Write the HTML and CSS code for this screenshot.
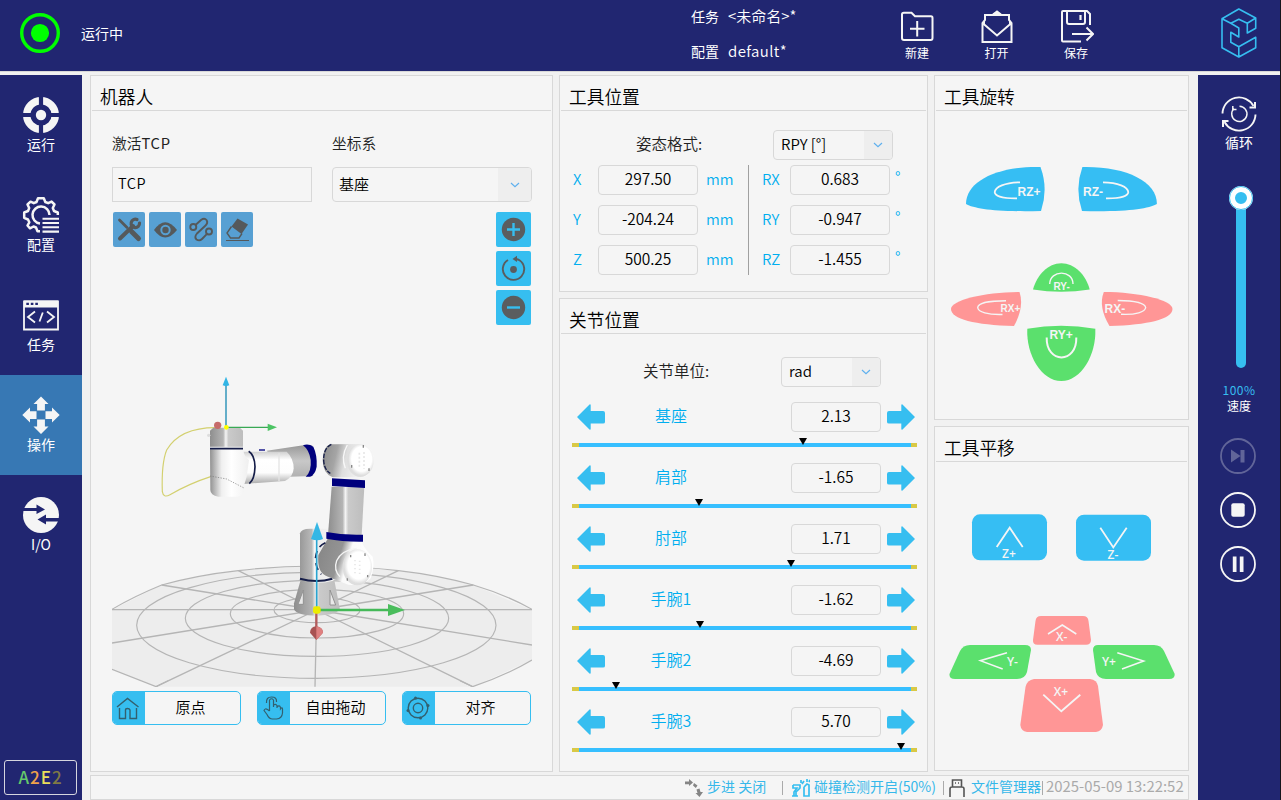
FILE: index.html
```html
<!DOCTYPE html>
<html lang="zh-CN">
<head>
<meta charset="utf-8">
<title>机器人操作</title>
<link rel="stylesheet" href="styles.css">
</head>
<body>
<svg class="defs" width="0" height="0">
  <symbol id="arrow-left" viewBox="0 0 28 26"><path d="M0 13 12.5 .5Q13.500 0 13.700 1V7H26Q28 7 28 9V18Q28 19.500 26 19.500H13.700V25Q13.500 26.300 12.500 25.500Z"/></symbol>
  <symbol id="arrow-right" viewBox="0 0 28 26"><path d="M28 13 15.500 .5Q14.500 0 14.300 1V7H2Q0 7 0 9V18Q0 19.500 2 19.500H14.300V25Q14.500 26.300 15.500 25.500Z"/></symbol>
  <symbol id="chevron" viewBox="0 0 10 6"><path d="M1 1 5 4.600 9 1" fill="none" stroke="#5fb0ee" stroke-width="1.200"/></symbol>
</svg>
<div class="app">
  <header class="topbar">
    <svg class="state-icon" viewBox="0 0 40 40"><circle cx="20" cy="20" r="18.300" fill="none" stroke="#0f0" stroke-width="3.400"/><circle cx="20" cy="20" r="9.100" fill="#0f0"/></svg>
    <span class="state">运行中</span>
    <div class="files">
      <div class="file-row"><span>任务</span><span class="file-name">&lt;未命名&gt;*</span></div>
      <div class="file-row"><span>配置</span><span class="file-name latin">default*</span></div>
    </div>
    <div class="file-actions">
      <div class="action"><svg viewBox="0 0 36 36"><path d="M4.800 4.700H12.500L16 8.300H32Q33.500 8.300 33.500 10V30Q33.500 32 31.800 32H5Q3 32 3 30V6.500Q3 4.700 4.800 4.700ZM18.200 13V28.500M11 20.700H25.500" fill="none" stroke="#f5f5f5" stroke-width="2"/></svg><span>新建</span></div>
      <div class="action"><svg viewBox="0 0 36 36"><path d="M3.500 34V15L6 12V7H30V12L32.500 15V34ZM3.500 15 18 27.500 32.500 15M14 6.500 18 3.500 22 6.500" fill="none" stroke="#f5f5f5" stroke-width="2"/><path d="M5.500 13V17L3.500 15ZM30.500 13V17L32.500 15ZM14 6.500 18 3.500 22 6.500Z" fill="#f5f5f5" stroke="#f5f5f5"/></svg><span>打开</span></div>
      <div class="action"><svg viewBox="0 0 36 36"><path d="M23 33.500H5Q4 33.500 4 32.500V4Q4 3 5 3H29L32 6V17M9 3.500V14Q9 16 11 16H25Q27 16 27 14V3.500M14 26H34.500M28.500 19.500 35 26 28.500 32.500" fill="none" stroke="#f5f5f5" stroke-width="2"/><path d="M22.500 7V12" stroke="#f5f5f5" stroke-width="2.200"/></svg><span>保存</span></div>
    </div>
    <svg class="logo" viewBox="0 0 36 50"><path d="M1 10.700 17.800 1 34.700 10V20.300L26.300 25V15.300L34.700 10M26.300 15.300 17.800 11.300 9.800 15.300 1 10.700V39.700L17.800 49 34.700 39.700V29.300L17.800 38.700 9.800 34.300V24.300L17.800 29V20L9.800 15.300M17.800 38.700V49M17.800 29" fill="none" stroke="#36bef0" stroke-width="1.600" stroke-linejoin="round"/></svg>
  </header>

  <div class="workspace">
    <nav class="nav">
      <div class="nav-item"><svg viewBox="0 0 36 36"><circle cx="18" cy="18" r="14.300" fill="none" stroke="#f5f5f5" stroke-width="7.400"/><path d="M18 0V36M0 18H36" stroke="#212671" stroke-width="4.200"/><circle cx="18" cy="18" r="8" fill="#212671"/><circle cx="18" cy="18" r="5.200" fill="#f5f5f5"/></svg><span>运行</span></div>
      <div class="nav-item"><svg viewBox="0 0 36 36"><path d="M17 34.300H14.500L13 30.500 10.500 29.500 7 31.300 4.500 28.500 6.300 25.300 5 22.500 1.200 20.800V15.500L5 14 6.200 11 4.500 7.500 7.500 4.700 10.800 6.200 13.500 5 15 1.300H20.800L22.300 5 25.200 6.200 28.600 4.600 31.500 7.500 29.800 11 31 14 34.800 15.500V18M17 26.500A8.500 8.500 0 1 1 26.500 18" fill="none" stroke="#f5f5f5" stroke-width="2.500" stroke-linejoin="round"/><path d="M19.500 21.800H36M19.500 26H36M19.500 30.300H36M19.500 34.600H36" stroke="#f5f5f5" stroke-width="2.100"/></svg><span>配置</span></div>
      <div class="nav-item"><svg viewBox="0 0 36 36"><path d="M1 4.500H35V32.500H1Z" fill="none" stroke="#f5f5f5" stroke-width="1.800"/><path d="M1 3.500H35V10.500H1Z" fill="#f5f5f5"/><path d="M3.300 6.900H5.900M7.800 6.900H10.400M12.300 6.900H14.900" stroke="#212671" stroke-width="2.300"/><path d="M12 14.500 5 20 12 25.500M24 14.500 31 20 24 25.500M19.800 15.500 16.500 24.500" fill="none" stroke="#f5f5f5" stroke-width="1.800"/></svg><span>任务</span></div>
      <div class="nav-item active"><svg viewBox="0 0 36 36"><path d="M18-.6 25.500 7H21.900V13.500H14.100V7H10.500ZM18 37 10.500 29.500H14.100V22.500H21.900V29.500H25.500ZM-.7 18 7 10.500V14.200H13.500V22H7V25.500ZM36.700 18 29 10.500V14.200H22.500V22H29V25.500Z" fill="#f5f5f5"/></svg><span>操作</span></div>
      <div class="nav-item"><svg viewBox="0 0 36 36"><circle cx="18" cy="18" r="18" fill="#f5f5f5"/><path d="M0 11H13.500V7.500L22 12.500 13.500 17V14H0ZM36 21H23V17.500L14.500 22.500 23 27.500V24.500H36Z" fill="#212671"/></svg><span>I/O</span></div>
      <div class="brand"><span class="c1">A</span><span class="c2">2</span><span class="c3">E</span><span class="c4">2</span></div>
    </nav>

    <main class="main">
      <div class="panels">
        <section class="panel robot">
          <h2>机器人</h2>
          <div class="robot-body">
            <div class="fields">
              <label>激活<span class="spaced">TCP</span></label><label>坐标系</label>
              <div class="field square">TCP</div>
              <div class="select tall"><span>基座</span><i><svg><use href="#chevron"/></svg></i></div>
            </div>
            <div class="view-tools">
              <div class="tool-row">
                <button class="tool dim"><svg viewBox="0 0 32 35"><g fill="none" stroke="#55595b" stroke-linecap="round"><path d="M6.500 8 14 15.500" stroke-width="2.800"/><path d="M18.500 19.500 25.500 26.500" stroke-width="5"/><path d="M7 26.500 20 14" stroke-width="4"/><path d="M24 7.500A4.200 4.200 0 1 0 26.500 11" stroke-width="3.200"/></g></svg></button>
                <button class="tool dim"><svg viewBox="0 0 32 35"><path d="M5 18Q16 2.500 28 18 16 33 5 18Z" fill="#55595b"/><circle cx="16.500" cy="18" r="4.200" fill="#55595b" stroke="#57a0d3" stroke-width="2"/></svg></button>
                <button class="tool dim"><svg viewBox="0 0 32 35"><g fill="none" stroke="#55595b" stroke-width="1.900"><circle cx="8.300" cy="15" r="3"/><circle cx="24" cy="19.500" r="3"/><path d="M10.500 13 16 8Q19.500 5.500 21.500 8 23.500 11 20 14L12 21.500Q9 25 11.500 27.500 14.500 29.500 17 27L22 21.800"/></g></svg></button>
                <button class="tool dim"><svg viewBox="0 0 32 35"><path d="M16.500 6.500 27 12.500 20.500 22 10.500 14.500Z" fill="#55595b"/><path d="M10.500 14.500 6 21 9.500 26H18L21 21.500" fill="none" stroke="#55595b" stroke-width="1.400"/><path d="M5 28.500H28" stroke="#55595b"/></svg></button>
              </div>
              <div class="zoom-col">
                <button class="tool"><svg viewBox="0 0 35 35"><circle cx="17.500" cy="17.500" r="11.700" fill="#5a5d5f"/><path d="M17.500 11V24M11 17.500H24" stroke="#36bef0" stroke-width="2.400"/></svg></button>
                <button class="tool"><svg viewBox="0 0 35 35"><path d="M12 9A10.700 10.700 0 1 0 23.500 9.300M20 8Q22 8.300 23.500 9.300" fill="none" stroke="#5a5d5f" stroke-width="1.900"/><path d="M16.500 8 21 4.800V11Z" fill="#5a5d5f"/><circle cx="17.500" cy="18.500" r="3.400" fill="#5a5d5f"/></svg></button>
                <button class="tool"><svg viewBox="0 0 35 35"><circle cx="17.500" cy="17.500" r="11.700" fill="#5a5d5f"/><path d="M11 17.500H24" stroke="#36bef0" stroke-width="2.400"/></svg></button>
              </div>
            </div>
            <svg class="scene" viewBox="36 -105 1260 1086">
              <defs>
                <linearGradient id="column"><stop offset="0" stop-color="#999"/><stop offset=".35" stop-color="#b9b9b9"/><stop offset=".45" stop-color="#fff"/><stop offset=".55" stop-color="#eee"/><stop offset="1" stop-color="#f3f3f3"/></linearGradient>
                <linearGradient id="tube"><stop offset="0" stop-color="#8e8e8e"/><stop offset=".4" stop-color="#b4b4b4"/><stop offset=".48" stop-color="#f4f4f4"/><stop offset=".56" stop-color="#cacaca"/><stop offset="1" stop-color="#bdbdbd"/></linearGradient>
                <linearGradient id="wrist"><stop offset="0" stop-color="#919191"/><stop offset=".3" stop-color="#f0f0f0"/><stop offset=".55" stop-color="#fff"/><stop offset="1" stop-color="#efefef"/></linearGradient>
                <linearGradient id="arm" x2="0" y2="1"><stop offset="0" stop-color="#d0d0d0"/><stop offset=".25" stop-color="#fff"/><stop offset=".65" stop-color="#fdfdfd"/><stop offset="1" stop-color="#a9a9a9"/></linearGradient>
                <linearGradient id="cuff" x2="0" y2="1"><stop offset="0" stop-color="#999"/><stop offset=".5" stop-color="#c8c8c8"/><stop offset="1" stop-color="#b1b1b1"/></linearGradient>
                <linearGradient id="joint" x2="1" y2=".25"><stop offset="0" stop-color="#858585"/><stop offset=".45" stop-color="#949494"/><stop offset=".62" stop-color="#fafafa"/><stop offset="1" stop-color="#fff"/></linearGradient>
                <linearGradient id="elbow" x2="1" y2=".15"><stop offset="0" stop-color="#8b8b8b"/><stop offset=".3" stop-color="#a5a5a5"/><stop offset=".5" stop-color="#dedede"/><stop offset="1" stop-color="#fff"/></linearGradient>
                <radialGradient id="cap" cx=".55" cy=".45"><stop offset=".75" stop-color="#fff"/><stop offset="1" stop-color="#dedede"/></radialGradient>
              </defs>
              <path d="M36 749 185 675Q410 618 650 618T1120 675L1296 750V900L1118 980H168L36 928Z" fill="#ededed"/>
              <g fill="none" stroke="#b5b5b5" stroke-width="3.500">
                <path d="M36 748Q100 710 185 675 295 645 415 632 530 618 650 618 780 618 895 632 1010 645 1120 675 1220 705 1296 748M36 928 168 980 204 962M1080 962 1118 980Q1220 945 1296 900"/>
                <path d="M36 749H1296M650 750 36 849M650 750 1296 855M650 750 168 980M650 750 1118 980M650 750 645 980M650 750 185 675M650 750 1120 675M650 750 415 632M650 750 895 632" stroke-width="4"/>
                <ellipse cx="651" cy="750" rx="129" ry="38"/><ellipse cx="651" cy="761" rx="260" ry="73"/><ellipse cx="651" cy="775" rx="395" ry="114"/><ellipse cx="649" cy="796" rx="539" ry="159"/>
              </g>
              <path d="M346 203Q240 203 200 270 184 310 187 395 190 415 210 404 270 370 332 350" fill="none" stroke="#d3d06f" stroke-width="3.500"/>
              <path d="M602 660 582 730V748Q590 767 652 767 715 765 719 745L703 660Z" fill="url(#tube)"/>
              <path d="M610 690 594 733 610 733ZM690 690 707 735H690Z" fill="#e9e9e9" stroke="#929292" stroke-width="3"/>
              <path d="M600 662V520Q603 506 630 506H700V662Q650 675 600 662Z" fill="url(#column)"/>
              <path d="M600 656Q650 670 697 656" fill="none" stroke="#151d48" stroke-width="6"/>
              <path d="M684 535 786 540Q785 560 818 590 825 620 812 655 790 680 745 674L684 650Q650 640 655 585Z" fill="url(#joint)"/>
              <path d="M676 548Q648 560 646 600 650 630 664 643" fill="none" stroke="#151d48" stroke-width="5" stroke-dasharray="22 14"/>
              <path d="M720 650Q700 630 710 602 725 570 770 565" fill="none" stroke="#f4f4f4" stroke-width="4"/>
              <ellipse cx="772" cy="622" rx="44" ry="54" fill="url(#cap)"/>
              <path d="M752 585V592M795 580V588M742 655V662M803 645V652" stroke="#888" stroke-width="4"/>
              <path d="M765 600V648M779 602V642" stroke="#e7e7e7" stroke-width="5" stroke-dasharray="4 8"/>
              <path d="M695 380H793L785 525H684Z" fill="url(#tube)"/>
              <path d="M679 516Q730 526 789 524V545Q730 546 679 536Z" fill="#00007d"/>
              <path d="M500 272 610 256H640V348L570 350Z" fill="url(#cuff)"/>
              <path d="M430 275H560Q581 295 581 325 580 350 555 363L430 372Z" fill="url(#arm)"/>
              <path d="M635 256 690 252H710V345L640 348Z" fill="#f7f7f7"/>
              <path d="M609 256Q625 250 640 260 652 285 650 320 645 345 630 350H617Q635 335 632 300 628 270 609 256Z" fill="#00007d"/>
              <path d="M668 300Q670 260 690 253L790 252Q820 265 821 300 820 340 790 352H698Q668 340 668 300Z" fill="url(#elbow)"/>
              <path d="M694 253Q670 265 671 302 673 330 691 340" fill="none" stroke="#151d48" stroke-width="4" stroke-dasharray="14 4"/>
              <ellipse cx="781" cy="302" rx="40" ry="49" fill="url(#cap)"/><path d="M742 255Q722 290 736 325" fill="none" stroke="#f8f8f8" stroke-width="4"/>
              <path d="M790 255V263M755 315V323M807 325V333" stroke="#888" stroke-width="4"/><path d="M778 278V320M792 276V326" stroke="#e7e7e7" stroke-width="5" stroke-dasharray="6 6"/>
              <path d="M696 355 795 361V384L696 378Z" fill="#00007d"/>
              <path d="M446 274Q464 285 465 320 464 357 448 371" fill="none" stroke="#151d48" stroke-width="5"/><path d="M477 270H495" stroke="#00007d" stroke-width="4"/><path d="M537 280V363" stroke="#e4e4e4" stroke-width="4"/>
              <path d="M330 268H429Q432 290 447 300L440 350 431 380V395Q428 410 405 410H355Q331 406 331 390Z" fill="url(#wrist)"/>
              <path d="M330 348 380 357 432 384" fill="none" stroke="#777" stroke-width="2" stroke-dasharray="4 4"/>
              <path d="M330 212 340 203H420L429 212V260H330Z" fill="url(#tube)"/><path d="M330 266H429" stroke="#151d48" stroke-width="5"/><circle cx="326" cy="226" r="5" fill="#ddd"/>
              <path d="M378 76V203" stroke="#1b8ab3" stroke-width="4"/><path d="M378 50 388 76Q378 81 368 76Z" fill="#32b5e5"/>
              <path d="M378 202H510" stroke="#38a954" stroke-width="4"/><path d="M503 191 531 202 503 213Z" fill="#4cc464"/>
              <circle cx="353" cy="196" r="11" fill="#c66b6b"/><circle cx="379" cy="202" r="7" fill="#ff0"/>
              <path d="M650 540V750" stroke="#29a4d0" stroke-width="5"/><path d="M651 486 669 537Q651 545 633 537Z" fill="#35b7e5"/>
              <path d="M650 750H870" stroke="#44b958" stroke-width="8"/><path d="M864 732 915 750 864 768Z" fill="#4abd5c"/>
              <path d="M649 750V805" stroke="#b35c5c" stroke-width="7"/><path d="M630 818Q631 800 649 799 668 801 669 818L649 840Z" fill="#a85252"/><path d="M649 799Q668 801 669 818L649 840Z" fill="#df8080"/><rect x="639" y="739" width="23" height="22" rx="7" fill="#ecec00"/>
            </svg>
            <div class="robot-actions">
              <button class="wide"><i><svg viewBox="0 0 33 34"><path d="M5 16 15.500 7.500 26.500 16M7.500 17V27.500H13.500V19Q13.500 17.500 15.500 17.500T18 19V27.500H24.500V17" fill="none" stroke="#33606f" stroke-width="1.400"/></svg></i><span>原点</span></button>
              <button class="wide"><i><svg viewBox="0 0 33 34"><path d="M12.500 20V9Q14.500 6.500 16.500 9V16V14Q18.500 12.500 20 14.500V17 16Q22.500 13.500 23.500 16.500V18Q25.500 15.500 25.500 18V22Q25 27.500 19.500 28H15.500Q12 28 10 23.500L7 19.500Q8 17 10.500 18.500L12.500 20M9.500 12Q9 6 14.500 6T19.500 11" fill="none" stroke="#33606f" stroke-width="1.200"/></svg></i><span>自由拖动</span></button>
              <button class="wide"><i><svg viewBox="0 0 33 34"><g fill="none" stroke="#33606f" stroke-width="1.400"><circle cx="16" cy="17" r="9.800"/><circle cx="16" cy="17" r="4.700"/></g><g fill="#33606f"><circle cx="13.500" cy="7" r="1.500"/><circle cx="26" cy="14.500" r="1.500"/><circle cx="18.500" cy="27" r="1.500"/><circle cx="6" cy="19.500" r="1.500"/></g></svg></i><span>对齐</span></button>
            </div>
          </div>
        </section>

        <div class="column">
          <section class="panel position">
            <h2>工具位置</h2>
            <div class="format-row"><label>姿态格式:</label><div class="select w120"><span>RPY [°]</span><i><svg><use href="#chevron"/></svg></i></div></div>
            <div class="pose">
              <div class="pose-half linear">
                <b>X</b><div class="field">297.50</div><em>mm</em>
                <b>Y</b><div class="field">-204.24</div><em>mm</em>
                <b>Z</b><div class="field">500.25</div><em>mm</em>
              </div>
              <div class="pose-half angular">
                <b>RX</b><div class="field">0.683</div><em>°</em>
                <b>RY</b><div class="field">-0.947</div><em>°</em>
                <b>RZ</b><div class="field">-1.455</div><em>°</em>
              </div>
            </div>
          </section>
          <section class="panel joints">
            <h2>关节位置</h2>
            <div class="format-row unit"><label>关节单位:</label><div class="select w100"><span>rad</span><i><svg><use href="#chevron"/></svg></i></div></div>
            <div class="joint"><div class="joint-row"><svg><use href="#arrow-left"/></svg><span>基座</span><div class="field">2.13</div><svg><use href="#arrow-right"/></svg></div><div class="track"><i style="left:231px"></i></div></div>
            <div class="joint"><div class="joint-row"><svg><use href="#arrow-left"/></svg><span>肩部</span><div class="field">-1.65</div><svg><use href="#arrow-right"/></svg></div><div class="track"><i style="left:127px"></i></div></div>
            <div class="joint"><div class="joint-row"><svg><use href="#arrow-left"/></svg><span>肘部</span><div class="field">1.71</div><svg><use href="#arrow-right"/></svg></div><div class="track"><i style="left:219px"></i></div></div>
            <div class="joint"><div class="joint-row"><svg><use href="#arrow-left"/></svg><span>手腕1</span><div class="field">-1.62</div><svg><use href="#arrow-right"/></svg></div><div class="track"><i style="left:128px"></i></div></div>
            <div class="joint"><div class="joint-row"><svg><use href="#arrow-left"/></svg><span>手腕2</span><div class="field">-4.69</div><svg><use href="#arrow-right"/></svg></div><div class="track"><i style="left:44px"></i></div></div>
            <div class="joint"><div class="joint-row"><svg><use href="#arrow-left"/></svg><span>手腕3</span><div class="field">5.70</div><svg><use href="#arrow-right"/></svg></div><div class="track"><i style="left:329px"></i></div></div>
          </section>
        </div>

        <div class="column pads">
          <section class="panel">
            <h2>工具旋转</h2>
            <svg class="pad rotate" viewBox="935 111 253 308">
              <g fill="#36bef3"><path d="M1040.500 167C998 166 966 181 966 204 975 209 997 212 1041 211Q1048.500 189 1040.500 167Z"/><path d="M1082.400 167C1125 166 1157 181 1156.900 204 1148 209 1126 212 1082 211Q1074.500 189 1082.400 167Z"/></g>
              <g fill="#ff9696"><path d="M1019.500 292C985 292 951 300 951 309 951 319 975 325 1014 326Q1024.500 307 1019.500 292Z"/><path d="M1103.800 292C1139 292 1172.500 300 1172.500 309 1172.500 319 1148 325 1109.500 326Q1098 307 1103.800 292Z"/></g>
              <g fill="#5be06d"><path d="M1033 289.500C1037 275 1048 263.300 1061.300 263.300S1086 275 1089.700 289.500Q1061 294 1033 289.500Z"/><path d="M1027.300 328.700Q1061 323 1095.300 328.700C1096.500 355 1081 381 1061.300 381S1026 355 1027.300 328.700Z"/></g>
              <g class="strokes"><path d="M1020 182.300C1005 182.500 995 187 994.700 192.300 995 196 1003 198.500 1017 198.300M1103 182.300C1118 182.500 1128 187 1128.300 192.300 1128 196 1120 198.500 1106 198.300"/><path d="M1006 300.700C990 300.700 978 303 977.700 307.500 978 312 988 315 1002.500 314.500M1117.700 300.500C1134 300.700 1145 303 1145.700 307.500 1145 312 1136 315 1121 314.300M1049.700 284C1050 269.500 1073 269.500 1073 284" stroke-width="1.400"/><path d="M1046.700 337.500C1046 364 1077 364 1076.300 337.500" stroke-width="2"/></g>
              <g class="pad-text"><text x="1017.500" y="195.500">RZ+</text><text x="1083" y="195.500">RZ-</text><text x="1000.500" y="312.300" class="small">RX+</text><text x="1104.500" y="313.300">RX-</text><text x="1053.500" y="290" class="small">RY-</text><text x="1049.500" y="338.800">RY+</text></g>
            </svg>
          </section>
          <section class="panel">
            <h2>工具平移</h2>
            <svg class="pad" viewBox="935 462 253 308">
              <g fill="#36bef3"><rect x="972" y="514.300" width="75" height="46" rx="8"/><rect x="1076" y="514.700" width="75" height="46" rx="8"/></g>
              <g fill="#ff9696"><path d="M1041 616H1083Q1088 616 1088.500 621L1091 640Q1091 644.700 1086 644.700H1037.500Q1032.500 644.700 1033 640L1035.500 621Q1036 616 1041 616Z"/><path d="M1034 679H1090Q1097 680 1098 686L1103 725Q1102 731 1096 732H1027Q1021 731 1020.300 725L1025.500 687Q1027 680 1034 679Z"/></g>
              <g fill="#5be06d"><path d="M970 645H1025Q1031 645 1031 650L1027 672Q1025 679 1017 679H955Q949 679 949.500 674L960 651Q963 645 970 645Z"/><path d="M1154 645H1098Q1093 645 1093 650L1096 672Q1098 679 1106 679H1169Q1175 679 1174.700 674L1164 651Q1161 645 1154 645Z"/></g>
              <g class="strokes"><path d="M996.700 547 1009.700 527.700 1022.700 547M1100.300 527.700 1113.300 547.500 1126.700 527.700M1043.300 694.700 1061.300 711.300 1080.300 694.700"/><path d="M1048 634 1062.300 625 1076.300 634M1007 652.700 980.300 660.700 1002.700 669M1117.300 652.700 1143.700 661 1122 669" stroke-width="1.500"/></g>
              <g class="pad-text open"><text x="1002" y="558.200">Z+</text><text x="1107.500" y="558.500">Z-</text><text x="1056" y="641.200">X-</text><text x="1007" y="665.800">Y-</text><text x="1102" y="665.800">Y+</text><text x="1053.700" y="696.300">X+</text></g>
            </svg>
          </section>
        </div>
      </div>

      <footer class="status">
        <svg class="s1" viewBox="0 0 18 18"><path d="M0 2.500H4V0L8 3.500 4 7V5.200H0ZM9 4 12.500 6.500 10.800 9 8 6.500ZM11.500 10.500 14.500 9.500 15.500 13H18L14.500 18 10.500 14H12.500Z" fill="#858585"/></svg><span class="t1">步进 关闭</span><i></i>
        <svg class="s2" viewBox="0 0 18 18"><g fill="none" stroke="#36bef0" stroke-width="1.700"><path d="M1 6H8V9L4 13V17M1 6V9H5L2 13V17M0 17H6M10 5 12 2M9 4V1M12 8V17H17V6L15 5 12 8M15 3V0M17 3 18 1"/></g></svg><span class="t2">碰撞检测开启(50%)</span><i></i>
        <svg class="s3" viewBox="0 0 16 18"><path d="M3.500 8V1H12.500V8M1 18V10Q1 8 3 8H13Q15 8 15 10V18M6 4H7M9 4H10" fill="none" stroke="#555" stroke-width="1.600"/></svg><span class="t3">文件管理器</span><i></i><time>2025-05-09 13:22:52</time>
      </footer>
    </main>

    <aside class="controls">
      <svg class="cycle" viewBox="0 0 36 36"><g fill="none" stroke="#f5f5f5" stroke-width="1.900"><path d="M1.500 17.500A16.500 16.500 0 0 1 32.500 10M34.500 18.500A16.500 16.500 0 0 1 3.500 26"/><path d="M34 6V11.500H28.500M2 31V25H7.500" stroke-width="2"/><path d="M13 12.500A7.600 7.600 0 1 0 18.500 10.300M11.800 10V13.500H15.500" stroke-width="1.500"/></g></svg>
      <span class="cycle-label">循环</span>
      <div class="slider"><i></i></div>
      <span class="percent">100%</span><span class="speed">速度</span>
      <svg class="round off" viewBox="0 0 36 36"><circle cx="18" cy="18" r="17"/><path d="M11 11.500 20.500 18V12H24.500V24.500H20.500V18L11 24.500Z"/></svg>
      <svg class="round" viewBox="0 0 36 36"><circle cx="18" cy="18" r="17"/><rect x="11.300" y="11.300" width="13.400" height="13.400" rx="2"/></svg>
      <svg class="round" viewBox="0 0 36 36"><circle cx="18" cy="18" r="17"/><path d="M12.800 10.500H16.500V26H12.800ZM19.800 10.500H23.500V26H19.800Z"/></svg>
    </aside>
  </div>
</div>
</body>
</html>
```
FILE: styles.css
```css
* { box-sizing: border-box; }
body { margin: 0; background: #efefef; font-family: "Noto Sans CJK SC", sans-serif; font-weight: 350; color: #000; overflow: hidden; }
svg { display: block; flex: none; }
i, em { font-style: normal; }
b { font-weight: inherit; }
button { padding: 0; border: 0; font: inherit; color: inherit; }
.defs { position: absolute; }
.app { width: 1281px; height: 800px; border-right: 1px solid #15151c; display: flex; flex-direction: column; }

.topbar { height: 71px; background: #212671; color: #fff; display: flex; align-items: flex-start; font-size: 14px; line-height: 20px; font-weight: 400; }
.state-icon { width: 40px; height: 40px; margin: 13px 0 0 20px; }
.state { width: 610px; margin: 23px 0 0 21px; }
.files { width: 203px; padding-top: 6px; display: flex; flex-direction: column; gap: 15px; }
.file-row { display: flex; gap: 9px; white-space: nowrap; }
.file-name { font-size: 15px; font-weight: 350; }
.file-name.latin { letter-spacing: .4px; }
.file-actions { display: flex; gap: 43.500px; padding-top: 8px; margin-left: 5px; font-size: 12px; line-height: 16px; }
.action { width: 36px; display: flex; flex-direction: column; align-items: center; }
.action svg { width: 36px; height: 36px; margin-bottom: 1px; }
.logo { width: 36px; height: 50px; margin: 8px 0 0 127px; }

.workspace { flex: 1; min-height: 0; border-top: 1px solid #d8d8d8; padding-top: 3px; display: flex; background: #f1f1f1; }
.nav { width: 82px; background: #212671; color: #fff; display: flex; flex-direction: column; }
.nav-item { height: 100px; padding-top: 22px; display: flex; flex-direction: column; align-items: center; font-size: 14px; line-height: 20px; font-weight: 400; }
.nav-item svg { width: 36px; height: 36px; overflow: visible; margin-bottom: 1px; }
.nav-item.active { background: #3778b4; }
.brand { width: 73px; height: 35px; margin: auto auto 5px 4px; padding-bottom: 3px; border: 1px solid #d5d5df; border-radius: 3px; display: flex; justify-content: center; align-items: center; font-size: 17px; letter-spacing: 1px; font-weight: 500; }
.c1 { color: #65c96b; } .c2 { color: #f0a24a; } .c3 { color: #e9de5a; } .c4 { color: #807a45; }

.main { width: 1099px; margin: 0 9px 0 8px; display: flex; flex-direction: column; gap: 3px; }
.panels { height: 697px; flex: none; display: flex; gap: 6px; }
.column { width: 369px; display: flex; flex-direction: column; gap: 6px; }
.pads { width: 255px; }
.panel { background: #f5f5f5; border: 1px solid #d8d8d8; }
.panel h2 { margin: 0 1px; height: 35px; padding: 8px 0 0 8px; border-bottom: 1px solid #d8d8d8; font-size: 17.700px; line-height: 24px; font-weight: inherit; color: #000; }
.robot { width: 463px; }
.position { height: 217px; }
.joints { flex: 1; }
.pads .panel { height: 345px; }

.robot-body { padding: 20px 20px 0 21px; }
.fields { display: grid; grid-template-columns: 200px 200px; column-gap: 20px; row-gap: 13px; }
.fields label { font-size: 14.700px; line-height: 23px; color: #222; }
.spaced { letter-spacing: .8px; font-weight: 400; }
.field { border: 1px solid #d8d8d8; border-radius: 4px; height: 30px; line-height: 25px; text-align: center; font-size: 15.500px; }
.field.square { height: 35px; line-height: 30px; border-radius: 0; text-align: left; padding-left: 5px; font-size: 14.500px; letter-spacing: .5px; }
.select { height: 30px; border: 1px solid #d8d8d8; border-radius: 4px; display: flex; justify-content: space-between; align-items: center; padding-left: 7px; font-size: 15px; line-height: 20px; overflow: hidden; }
.select span { margin-top: -2px; }
.select i { height: 100%; width: 28px; background: #eee; display: flex; align-items: center; justify-content: center; }
.select svg { width: 10px; height: 6px; }
.select.tall { height: 35px; padding-left: 6px; }
.tall i { width: 33px; }
.w120 { width: 120px; } .w100 { width: 100px; }
.view-tools { display: flex; justify-content: space-between; padding: 10px 0 0 1px; }
.tool-row { display: flex; gap: 4px; }
.zoom-col { display: flex; flex-direction: column; gap: 4px; padding-right: 1px; }
.tool { width: 35px; height: 35px; border-radius: 2px; background: #36bef0; }
.tool.dim { width: 32px; background: #57a0d3; }
.scene { width: 420px; height: 362px; }
.robot-actions { display: flex; gap: 16px; padding-top: 4px; }
.wide { width: 129px; height: 34px; border: 1px solid #36bef0; border-radius: 5px; background: #f5f5f5; display: flex; overflow: hidden; font-size: 15px; line-height: 30px; }
.wide i { width: 32px; background: #36bef0; }
.wide svg { width: 33px; height: 34px; margin: -1px; }
.wide span { flex: 1; text-align: center; padding-right: 4px; }

.format-row { display: flex; justify-content: space-between; padding: 19px 34px 0 76px; font-size: 15.500px; line-height: 27px; color: #222; height: 54px; }
.format-row .select { color: #000; }
.format-row.unit { padding: 23px 46px 0 83px; height: 68px; }
.pose { display: flex; padding-left: 13px; }
.pose-half { display: grid; row-gap: 10px; font-size: 15px; line-height: 28px; color: #00aeef; }
.pose-half .field { color: #000; }
.linear { grid-template-columns: 25px 100px 50px; border-right: 1px solid #a0a0a0; width: 176px; }
.linear em { padding-left: 8px; }
.angular { grid-template-columns: 41px 100px 20px; }
.angular b { padding-left: 13px; white-space: nowrap; }
.angular em { padding-left: 5px; line-height: 24px; }

.joint { height: 61px; padding: 0 10px 0 12px; }
.joint-row { display: flex; align-items: center; height: 30px; padding-left: 5px; }
.joint-row svg { width: 28px; height: 26px; fill: #36bef0; }
.joint-row span { width: 132px; text-align: center; font-size: 16px; line-height: 28px; color: #00aeef; margin-top: -4px; }
.joint-row .field { width: 90px; margin: 0 6px 0 54px; }
.track { width: 345px; height: 4px; margin-top: 11px; position: relative; background: linear-gradient(90deg, #d9c945 7px, #36bfff 7px, #36bfff 339px, #d9c945 339px); }
.track i { position: absolute; top: -5px; margin-left: -4px; border: 4px solid transparent; border-top: 7px solid #000; border-bottom: 0; }

.pad { width: 253px; height: 308px; }
.strokes { fill: none; stroke: #f5f5f5; stroke-width: 1.8; }
.pad-text { fill: #f5f5f5; font: bold 12px "Liberation Sans", sans-serif; }
.pad-text .small { font-size: 10px; }
.pad-text.open { font: 600 12px "Open Sans", sans-serif; }

.status { height: 25px; flex: none; border: 1px solid #d8d8d8; background: #f5f5f5; display: flex; align-items: center; font-size: 14px; line-height: 20px; font-weight: 400; color: #36b8ea; white-space: nowrap; padding-left: 594px; }
.status span, .status time { margin-top: -3px; }
.status > i { width: 1px; height: 14px; background: #aaa; }
.status svg { height: 18px; }
.s1 { width: 18px; margin-right: 4px; }
.t1 { width: 75px; }
.s2 { width: 18px; margin: 0 4px 0 9px; }
.t2 { width: 129px; }
.s3 { width: 16px; margin: 0 6px 0 5px; }
.t3 { width: 71px; }
.status time { color: #aaa; margin-left: 3px; font-size: 14.900px; }

.controls { width: 82px; background: #212671; color: #fff; display: flex; flex-direction: column; align-items: center; font-weight: 400; }
.cycle { width: 36px; height: 36px; margin-top: 21px; }
.cycle-label { font-size: 14px; line-height: 20px; }
.slider { width: 10px; height: 178px; margin: 38px 0 0 4px; border-radius: 5px; background: #36bef0; position: relative; }
.slider i { position: absolute; left: -7px; top: -4px; width: 24px; height: 24px; border-radius: 50%; border: 6px solid #fff; background: #36bef0; outline: 1px solid #36bef0; outline-offset: -1px; }
.percent { color: #36bef0; font-size: 12px; line-height: 16px; margin-top: 14px; letter-spacing: .5px; }
.speed { font-size: 12px; line-height: 16px; }
.round { width: 36px; height: 36px; margin: 0 2px 18px 0; fill: #f5f5f5; }
.speed + .round { margin-top: 24px; }
.round circle { fill: none; stroke: #f5f5f5; stroke-width: 1.8; }
.off { opacity: .3; }
```
